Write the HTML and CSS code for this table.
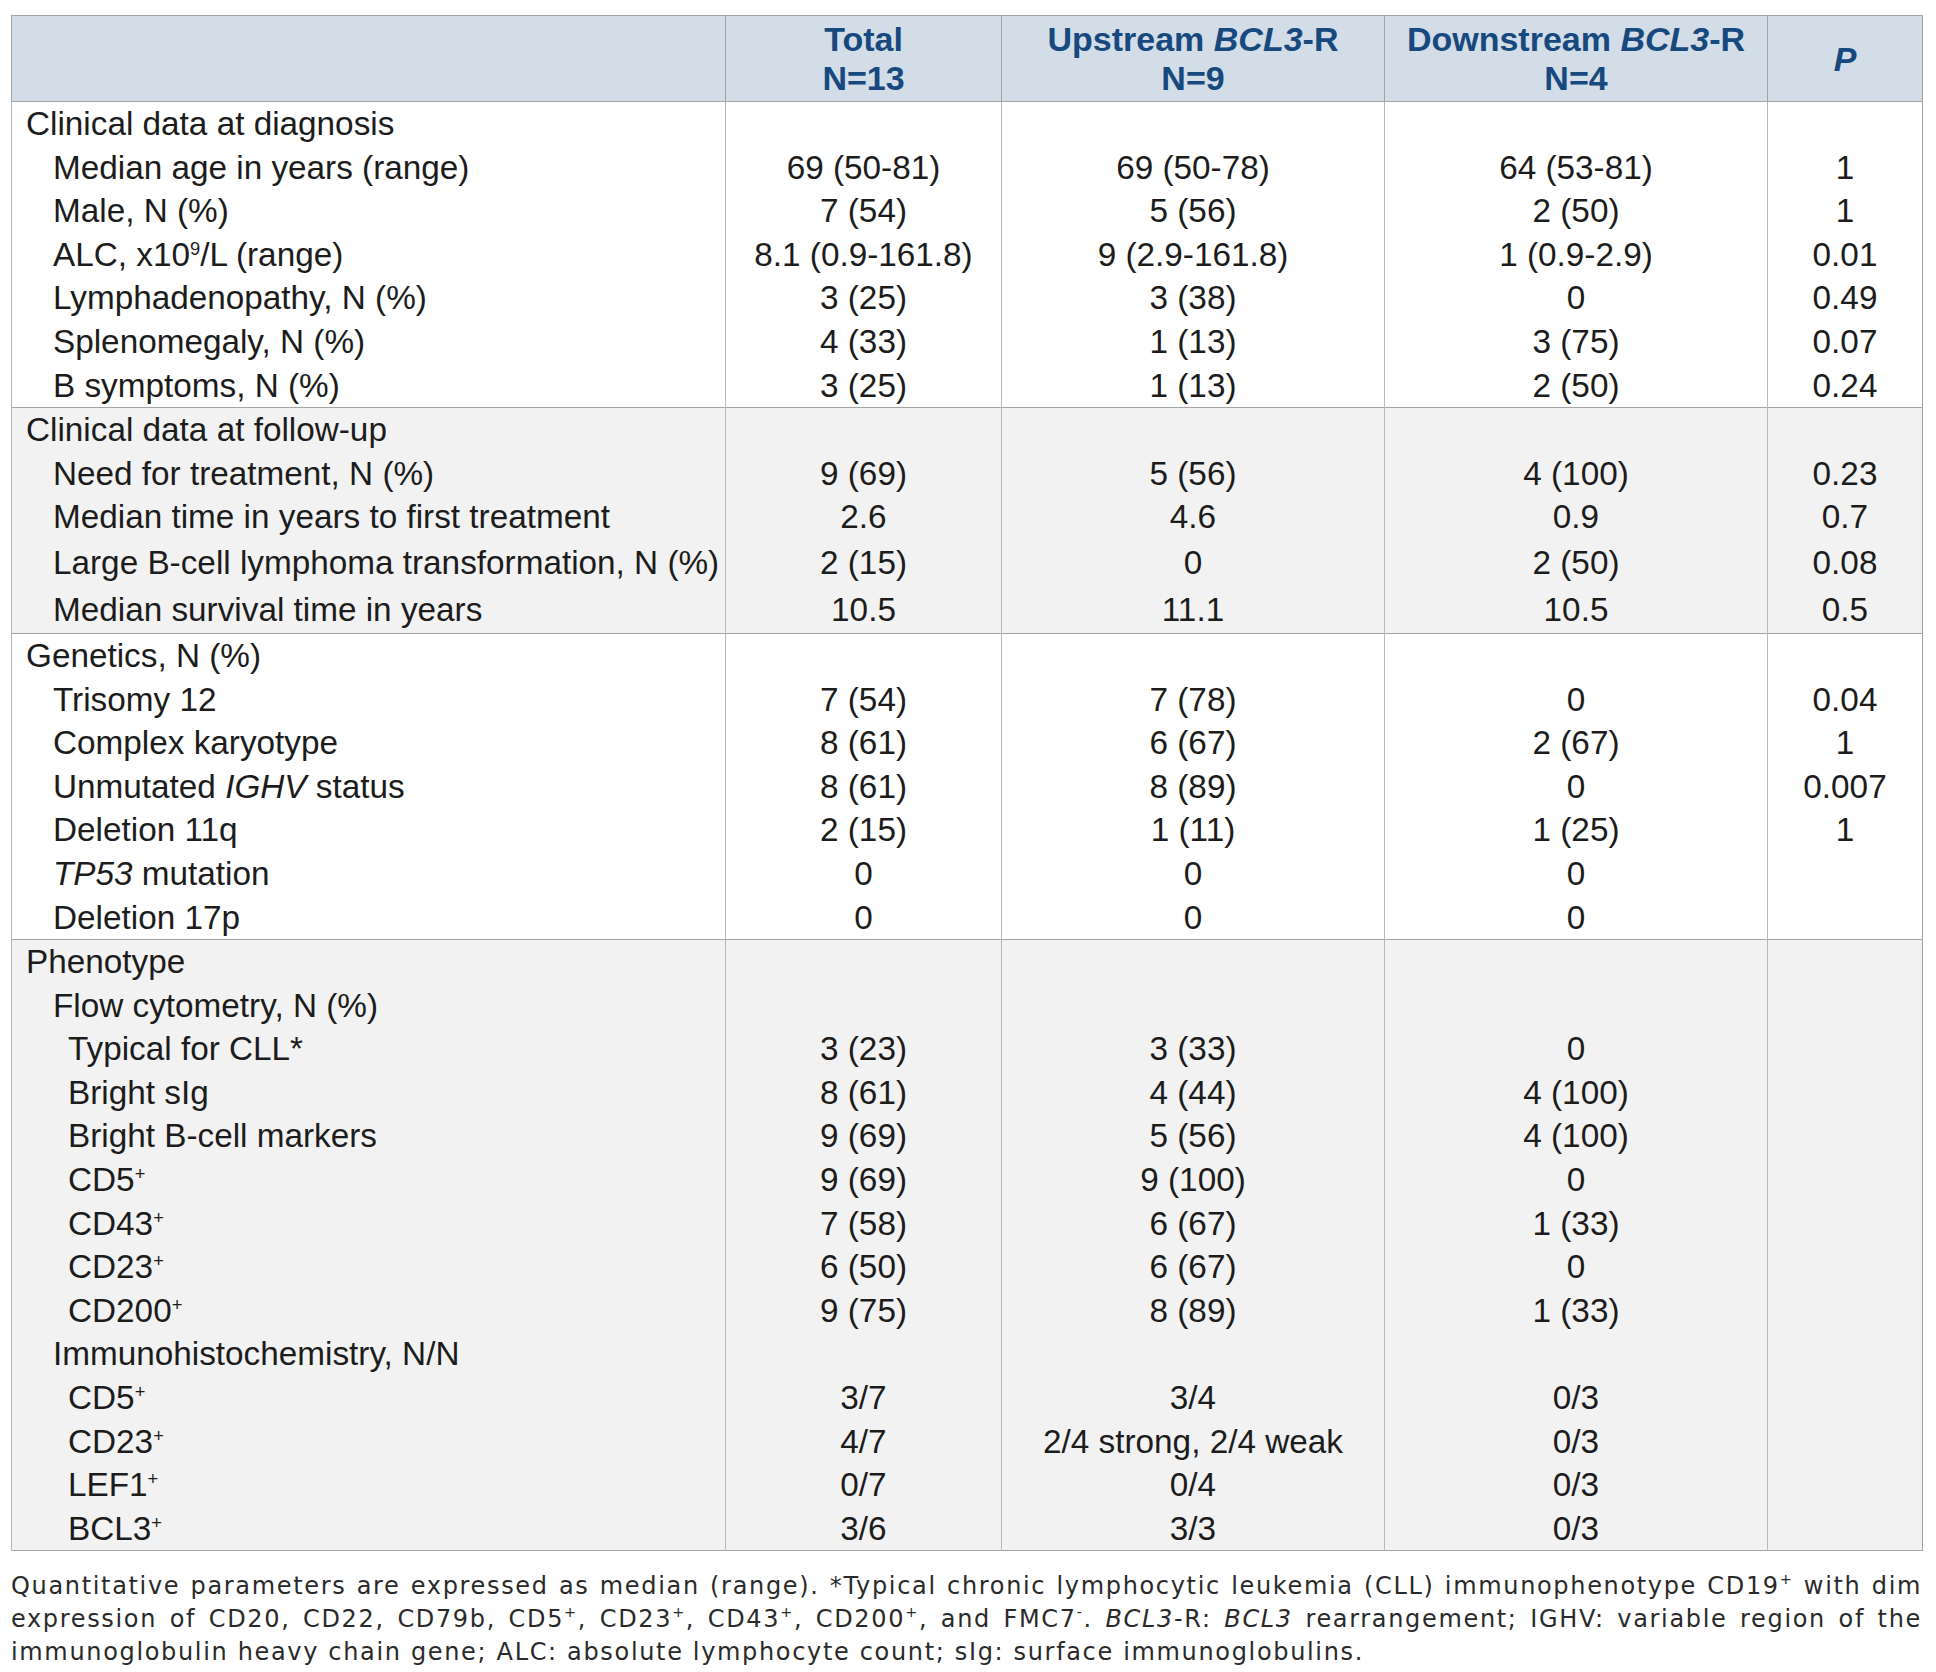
FILE: index.html
```html
<!DOCTYPE html>
<html lang="en">
<head>
<meta charset="utf-8">
<title>Characteristics of patients with BCL3 rearrangement</title>
<link rel="stylesheet" href="styles.css">
</head>
<body>
<div class="page">
  <table class="data">
    <colgroup>
      <col class="c-label"><col class="c-total"><col class="c-up"><col class="c-down"><col class="c-p">
    </colgroup>
    <thead>
      <tr>
        <th></th>
        <th>Total<br>N=13</th>
        <th>Upstream <i>BCL3</i>-R<br>N=9</th>
        <th>Downstream <i>BCL3</i>-R<br>N=4</th>
        <th><i>P</i></th>
      </tr>
    </thead>
    <tbody>
      <tr><td class="l0">Clinical data at diagnosis</td><td></td><td></td><td></td><td></td></tr>
      <tr><td class="l1">Median age in years (range)</td><td>69 (50-81)</td><td>69 (50-78)</td><td>64 (53-81)</td><td>1</td></tr>
      <tr><td class="l1">Male, N (%)</td><td>7 (54)</td><td>5 (56)</td><td>2 (50)</td><td>1</td></tr>
      <tr><td class="l1">ALC, x10<sup class="sp">9</sup>/L (range)</td><td>8.1 (0.9-161.8)</td><td>9 (2.9-161.8)</td><td>1 (0.9-2.9)</td><td>0.01</td></tr>
      <tr><td class="l1">Lymphadenopathy, N (%)</td><td>3 (25)</td><td>3 (38)</td><td>0</td><td>0.49</td></tr>
      <tr><td class="l1">Splenomegaly, N (%)</td><td>4 (33)</td><td>1 (13)</td><td>3 (75)</td><td>0.07</td></tr>
      <tr><td class="l1">B symptoms, N (%)</td><td>3 (25)</td><td>1 (13)</td><td>2 (50)</td><td>0.24</td></tr>
    </tbody>
    <tbody class="shade">
      <tr><td class="l0">Clinical data at follow-up</td><td></td><td></td><td></td><td></td></tr>
      <tr><td class="l1">Need for treatment, N (%)</td><td>9 (69)</td><td>5 (56)</td><td>4 (100)</td><td>0.23</td></tr>
      <tr><td class="l1">Median time in years to first treatment</td><td>2.6</td><td>4.6</td><td>0.9</td><td>0.7</td></tr>
      <tr class="tall"><td class="l1">Large B-cell lymphoma transformation, N (%)</td><td>2 (15)</td><td>0</td><td>2 (50)</td><td>0.08</td></tr>
      <tr class="tall"><td class="l1">Median survival time in years</td><td>10.5</td><td>11.1</td><td>10.5</td><td>0.5</td></tr>
    </tbody>
    <tbody>
      <tr><td class="l0">Genetics, N (%)</td><td></td><td></td><td></td><td></td></tr>
      <tr><td class="l1">Trisomy 12</td><td>7 (54)</td><td>7 (78)</td><td>0</td><td>0.04</td></tr>
      <tr><td class="l1">Complex karyotype</td><td>8 (61)</td><td>6 (67)</td><td>2 (67)</td><td>1</td></tr>
      <tr><td class="l1">Unmutated <i>IGHV</i> status</td><td>8 (61)</td><td>8 (89)</td><td>0</td><td>0.007</td></tr>
      <tr><td class="l1">Deletion 11q</td><td>2 (15)</td><td>1 (11)</td><td>1 (25)</td><td>1</td></tr>
      <tr><td class="l1"><i>TP53</i> mutation</td><td>0</td><td>0</td><td>0</td><td></td></tr>
      <tr><td class="l1">Deletion 17p</td><td>0</td><td>0</td><td>0</td><td></td></tr>
    </tbody>
    <tbody class="shade">
      <tr><td class="l0">Phenotype</td><td></td><td></td><td></td><td></td></tr>
      <tr><td class="l1">Flow cytometry, N (%)</td><td></td><td></td><td></td><td></td></tr>
      <tr><td class="l2">Typical for CLL*</td><td>3 (23)</td><td>3 (33)</td><td>0</td><td></td></tr>
      <tr><td class="l2">Bright sIg</td><td>8 (61)</td><td>4 (44)</td><td>4 (100)</td><td></td></tr>
      <tr><td class="l2">Bright B-cell markers</td><td>9 (69)</td><td>5 (56)</td><td>4 (100)</td><td></td></tr>
      <tr><td class="l2">CD5<sup class="sp">+</sup></td><td>9 (69)</td><td>9 (100)</td><td>0</td><td></td></tr>
      <tr><td class="l2">CD43<sup class="sp">+</sup></td><td>7 (58)</td><td>6 (67)</td><td>1 (33)</td><td></td></tr>
      <tr><td class="l2">CD23<sup class="sp">+</sup></td><td>6 (50)</td><td>6 (67)</td><td>0</td><td></td></tr>
      <tr><td class="l2">CD200<sup class="sp">+</sup></td><td>9 (75)</td><td>8 (89)</td><td>1 (33)</td><td></td></tr>
      <tr><td class="l1">Immunohistochemistry, N/N</td><td></td><td></td><td></td><td></td></tr>
      <tr><td class="l2">CD5<sup class="sp">+</sup></td><td>3/7</td><td>3/4</td><td>0/3</td><td></td></tr>
      <tr><td class="l2">CD23<sup class="sp">+</sup></td><td>4/7</td><td>2/4 strong, 2/4 weak</td><td>0/3</td><td></td></tr>
      <tr><td class="l2">LEF1<sup class="sp">+</sup></td><td>0/7</td><td>0/4</td><td>0/3</td><td></td></tr>
      <tr><td class="l2">BCL3<sup class="sp">+</sup></td><td>3/6</td><td>3/3</td><td>0/3</td><td></td></tr>
    </tbody>
  </table>
  <p class="note">
    <span class="line just">Quantitative parameters are expressed as median (range). *Typical chronic lymphocytic leukemia (CLL) immunophenotype CD19<sup class="fs">+</sup> with dim</span>
    <span class="line just">expression of CD20, CD22, CD79b, CD5<sup class="fs">+</sup>, CD23<sup class="fs">+</sup>, CD43<sup class="fs">+</sup>, CD200<sup class="fs">+</sup>, and FMC7<sup class="fs">-</sup>. <i>BCL3</i>-R: <i>BCL3</i> rearrangement; IGHV: variable region of the</span>
    <span class="line">immunoglobulin heavy chain gene; ALC: absolute lymphocyte count; sIg: surface immunoglobulins.</span>
  </p>
</div>
</body>
</html>
```

FILE: styles.css
```css
html, body {
  margin: 0;
  padding: 0;
  background: #ffffff;
}

.page {
  padding: 15px 14px 0 11px;
}

.data {
  width: 1911px;
  border-collapse: collapse;
  table-layout: fixed;
  font-family: "Liberation Sans", Arial, sans-serif;
  font-size: 33.3px;
  color: #1c1c1c;
  border: 1px solid #a4a4a4;
}

.c-label { width: 714px; }
.c-total { width: 276px; }
.c-up { width: 383px; }
.c-down { width: 383px; }
.c-p { width: 155px; }

.data th {
  background: #d3dde7;
  color: #17497e;
  font-weight: bold;
  font-size: 34px;
  line-height: 39px;
  padding: 4px 0 3px;
  text-align: center;
  vertical-align: middle;
  border-left: 1px solid #a4a4a4;
  border-bottom: 1px solid #a4a4a4;
}

.data tbody {
  border-top: 1px solid #a4a4a4;
}

.data td {
  padding: 0;
  line-height: 43.6px;
  text-align: center;
  white-space: nowrap;
  border-left: 1px solid #b8b8b8;
}

.data tr.tall td {
  line-height: 47px;
}

.data tbody.shade td {
  background: #f2f2f2;
}

.data td.l0 {
  text-align: left;
  padding-left: 14px;
}

.data td.l1 {
  text-align: left;
  padding-left: 41px;
}

.data td.l2 {
  text-align: left;
  padding-left: 56px;
}

.sp {
  font-size: 0.55em;
  line-height: 0;
  vertical-align: 0.6em;
}

.note {
  margin: 19px 0 0;
  font-family: "DejaVu Sans", "Noto Sans", sans-serif;
  font-size: 24px;
  letter-spacing: 1.66px;
  line-height: 33px;
  color: #2a2a2a;
}

.note .line {
  display: block;
  text-align: left;
}

.note .line.just {
  text-align: justify;
  text-align-last: justify;
}

.fs {
  font-size: 0.6em;
  line-height: 0;
  vertical-align: 0.7em;
}
```
